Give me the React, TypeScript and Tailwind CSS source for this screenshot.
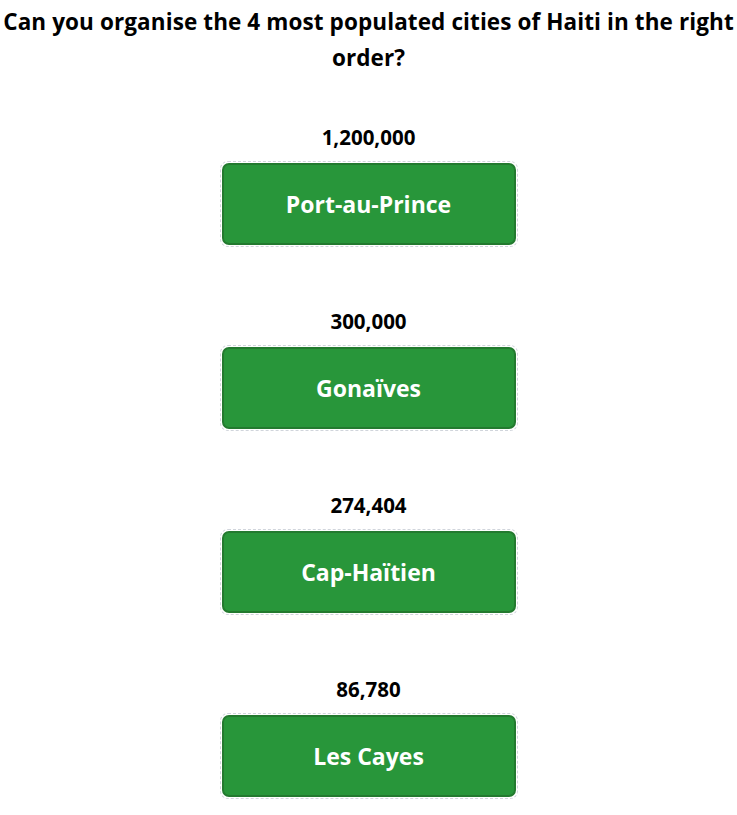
const cities = [
  { name: "Port-au-Prince", population: "1,200,000" },
  { name: "Gonaïves", population: "300,000" },
  { name: "Cap-Haïtien", population: "274,404" },
  { name: "Les Cayes", population: "86,780" },
];

export default function App() {
  return (
    <div className="min-h-screen bg-white font-['Open_Sans',sans-serif] text-black">
      <h1 className="pt-1 text-center text-[22.5px] font-bold leading-[36px] tracking-[0.1px]">
        Can you organise the 4 most populated cities of Haiti in the right order?
      </h1>

      <div className="mt-[49px] flex flex-col items-center gap-[62px]">
        {cities.map((city) => (
          <div key={city.name} className="flex flex-col items-center">
            <div className="text-[20.5px] font-bold leading-6">{city.population}</div>
            <div className="mt-3 rounded-lg border border-dashed border-gray-300 p-px">
              <div className="flex h-[82px] w-[294px] items-center justify-center rounded-[7px] border-2 border-[#237a2f] bg-[#28963a] text-[23px] font-bold text-white">
                {city.name}
              </div>
            </div>
          </div>
        ))}
      </div>
    </div>
  );
}
